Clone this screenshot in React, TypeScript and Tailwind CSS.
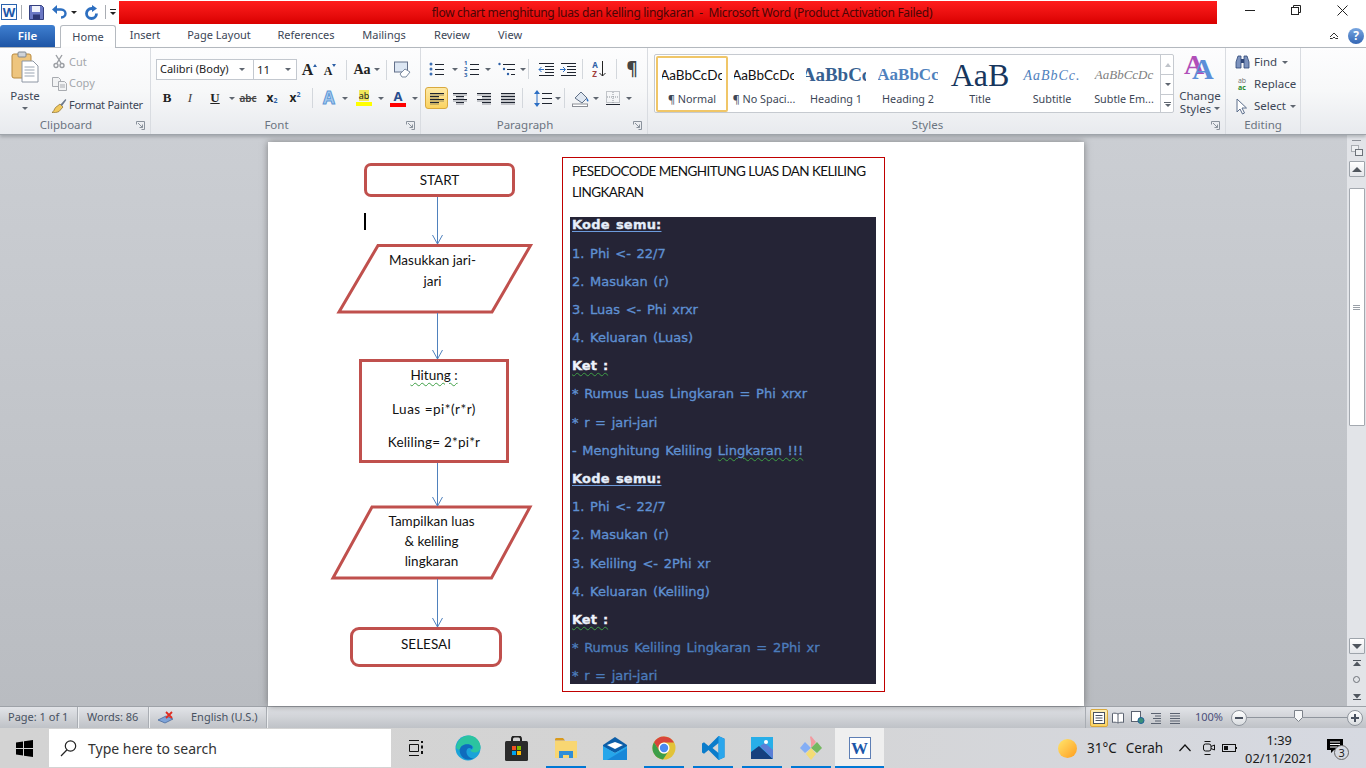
import type { ReactNode } from "react";

const Caret = ({ c = "" }: { c?: string }) => (
  <span className={`inline-block w-0 h-0 shrink-0 border-x-[3px] border-t-[3px] border-x-transparent border-t-[#5f6670] ${c}`} />
);

const B = ({ c = "", children }: { c?: string; children?: ReactNode }) => (
  <span className={`flex items-center justify-center shrink-0 h-full ${c}`}>{children}</span>
);

const Sep = ({ c = "" }: { c?: string }) => <span className={`block w-px h-[20px] shrink-0 bg-[#d3d7dc] ${c}`} />;

const Launcher = ({ c = "" }: { c?: string }) => (
  <svg width="9" height="9" viewBox="0 0 9 9" className={`shrink-0 ${c}`} fill="none" stroke="#8a929c">
    <path d="M.5 3.5v-3h8v8h-3" />
    <path d="M2 2l4.5 4.5M6.5 3.5v3h-3" />
  </svg>
);

const Group = ({ c, label, launcher = true, children }: { c: string; label: string; launcher?: boolean; children: ReactNode }) => (
  <div className={`flex flex-col shrink-0 h-full border-r border-[#d9dce1] ${c}`}>
    <div className="flex-1 min-h-0">{children}</div>
    <div className="flex items-center h-[18px] shrink-0">
      <span className={`flex-1 text-center text-[11.5px] text-[#6b7480] ${launcher ? "pr-[4px]" : ""}`}>{label}</span>
      {launcher && <Launcher c="mr-[5px]" />}
    </div>
  </div>
);

const Lines = ({ kind }: { kind: "left" | "center" | "right" | "just" }) => {
  const rows = [3, 6, 9, 12];
  const ends: Record<string, number[][]> = {
    left: [[1, 15], [1, 10], [1, 15], [1, 10]],
    center: [[1, 15], [4, 12], [1, 15], [4, 12]],
    right: [[1, 15], [6, 15], [1, 15], [6, 15]],
    just: [[1, 15], [1, 15], [1, 15], [1, 15]],
  };
  return (
    <svg width="16" height="16" viewBox="0 0 16 16" stroke="#1f2530" strokeWidth="1">
      {rows.map((y, i) => (
        <g key={y}>
          <line x1={ends[kind][i][0]} x2={ends[kind][i][1]} y1={y + 0.5} y2={y + 0.5} />
          <line x1={ends[kind][i][0]} x2={ends[kind][i][1]} y1={y + 2} y2={y + 2} strokeOpacity=".45" />
        </g>
      ))}
    </svg>
  );
};

const PasteIcon = () => (
  <svg width="28" height="32" viewBox="0 0 28 32">
    <rect x="1" y="3" width="19" height="24" rx="2" fill="#eec57e" stroke="#b98a3e" />
    <rect x="7" y="1" width="8" height="5" rx="1" fill="#cfd3d8" stroke="#7f8790" />
    <path d="M11 10h11l5 5v16H11z" fill="#fff" stroke="#8d96a3" />
    <path d="M13.5 16h10M13.5 19h10M13.5 22h10M13.5 25h10" stroke="#9aa5b3" />
  </svg>
);

const Scissors = () => (
  <svg width="12" height="15" viewBox="0 0 12 15" fill="none" stroke="#9b9ea3" strokeWidth="1.4">
    <path d="M3 1l5 8M9 1L4 9" />
    <circle cx="3" cy="11.5" r="2" />
    <circle cx="9" cy="11.5" r="2" />
  </svg>
);

const CopyIcon = () => (
  <svg width="15" height="14" viewBox="0 0 15 14" fill="#f2f3f4" stroke="#a8abb0">
    <path d="M.5.5h6l2 2v7h-8z" />
    <path d="M6.5 4.5h6l2 2v7h-8z" />
    <path d="M8 8h5M8 10h5" />
  </svg>
);

const BrushIcon = () => (
  <svg width="16" height="15" viewBox="0 0 16 15">
    <path d="M9 6l3 3-4 4.5c-2 1-5 1.500-7 1 2-1 2-3 3.500-5z" fill="#f1c95f" stroke="#8a6b2a" strokeWidth=".7" />
    <path d="M9.500 6.500L14 1.500c.7-.7 1.700.3 1 1l-4 5.500z" fill="#6d7a8c" />
  </svg>
);

const Bullets = () => (
  <svg width="16" height="14" viewBox="0 0 16 14" stroke="#1f2530">
    <circle cx="2" cy="2" r="1.500" fill="#3d6fb3" stroke="none" />
    <circle cx="2" cy="7" r="1.500" fill="#3d6fb3" stroke="none" />
    <circle cx="2" cy="12" r="1.500" fill="#3d6fb3" stroke="none" />
    <path d="M6 2.500h9M6 7.500h9M6 12.500h9" />
  </svg>
);

const Numbers = () => (
  <div className="relative w-[16px] h-[14px]">
    <span className="absolute left-0 -top-[2px] flex flex-col text-[6px] leading-[6px] font-bold text-[#2c5fa6]">
      <span>1</span>
      <span>2</span>
      <span>3</span>
    </span>
    <svg width="16" height="14" viewBox="0 0 16 14" stroke="#1f2530">
      <path d="M6 2.500h9M6 7.500h9M6 12.500h9" />
    </svg>
  </div>
);

const Multi = () => (
  <svg width="18" height="14" viewBox="0 0 18 14" stroke="#1f2530">
    <circle cx="1.500" cy="2" r="1.200" fill="#2c5fa6" stroke="none" />
    <circle cx="6" cy="7" r="1.200" fill="#2c5fa6" stroke="none" />
    <circle cx="10" cy="12" r="1.200" fill="#2c5fa6" stroke="none" />
    <path d="M5 2.500h12M9 7.500h8M13 12.500h4" />
  </svg>
);

const Indent = ({ flip = false }: { flip?: boolean }) => (
  <svg width="17" height="15" viewBox="0 0 17 15" stroke="#1f2530">
    <path d="M1 1.500h15M7 4.500h9M7 7.500h9M7 10.500h9M1 13.500h15" />
    {flip ? <path d="M0 7.500h5M3 5l2.500 2.500L3 10" stroke="#2c6fc4" fill="none" /> : <path d="M6 7.500H1M3.500 5L1 7.500 3.500 10" stroke="#2c6fc4" fill="none" />}
  </svg>
);

const LineSpacing = () => (
  <svg width="20" height="17" viewBox="0 0 20 17">
    <path d="M4 0l3 4H1zM4 17l3-4H1zM3.500 4h1v9h-1z" fill="#2c6fc4" />
    <path d="M9 3.500h10M9 8.500h10M9 13.500h10" stroke="#1f2530" />
  </svg>
);

const Bucket = () => (
  <svg width="18" height="17" viewBox="0 0 18 17">
    <path d="M3 8l6-6 6 6-5 5z" fill="#dfe7f1" stroke="#5f6f85" />
    <path d="M15 8c1.500 2 2 3 1 3.500S14 10 15 8z" fill="#2c6fc4" />
    <rect x="0.500" y="14" width="15" height="2.500" fill="#fff" stroke="#8b8f96" />
  </svg>
);

const BorderIcon = () => (
  <svg width="14" height="14" viewBox="0 0 14 14" fill="none" stroke="#8d939b" strokeDasharray="1 1">
    <rect x=".5" y=".5" width="13" height="11" />
    <path d="M7 1v11M1 6h12" />
    <path d="M0 13.500h14" stroke="#1f2530" strokeDasharray="none" />
  </svg>
);

const Binocular = () => (
  <svg width="15" height="14" viewBox="0 0 15 14">
    <path d="M1 7l2-6h3v12H1zM14 7l-2-6H9v12h5z" fill="#7c92bd" stroke="#2f4677" strokeWidth=".8" />
    <rect x="6" y="4" width="3" height="4" fill="#2f4677" />
  </svg>
);

const Pointer = () => (
  <svg width="12" height="17" viewBox="0 0 12 17">
    <path d="M1 1v13l3-3 2.500 5 2-1-2.500-5h4.500z" fill="#fff" stroke="#5c6e8c" />
  </svg>
);

const StyleCell = ({ sample, label, c, active = false }: { sample: string; label: string; c: string; active?: boolean }) => (
  <div className={`flex flex-col items-center shrink-0 w-[72px] h-[56px] overflow-hidden ${active ? "border-[2px] rounded-[2px] border-[#f0c668] bg-white" : "border-[2px] border-transparent"}`}>
    <div className="flex items-center justify-center w-[60px] h-[34px] overflow-hidden">
      <span className={`whitespace-nowrap ${c}`}>{sample}</span>
    </div>
    <span className="text-[10.8px] leading-[14px] text-[#3c4656] whitespace-nowrap">{label}</span>
  </div>
);

const Tab = ({ c, label }: { c: string; label: string }) => (
  <span className={`flex items-center justify-center shrink-0 h-full text-[11px] text-[#3c4656] ${c}`}>{label}</span>
);

function TitleRow() {
  return (
    <div className="flex items-stretch h-[24px] shrink-0 bg-white">
      <div className="flex items-center w-[119px] shrink-0 pl-[1px]">
        <div className="relative flex items-center justify-center w-[16px] h-[16px] bg-[#fdfdff] border border-[#2a62ad]">
          <span className="text-[13px] leading-none font-bold text-[#1c56a8]">W</span>
        </div>
        <Sep c="ml-[4px] !h-[14px] !bg-[#a9adb3]" />
        <svg width="15" height="15" viewBox="0 0 15 15" className="ml-[7px]">
          <path d="M.5.5h12l2 2v12H.5z" fill="#6b78c4" stroke="#34407f" />
          <rect x="3" y="1" width="8" height="6" fill="#f0f2fa" />
          <rect x="4" y="9.500" width="7" height="5" fill="#2e3773" />
        </svg>
        <svg width="15" height="14" viewBox="0 0 15 14" className="ml-[8px]" fill="none">
          <path d="M4 4.500h5c6 0 6 8 0 8" stroke="#2d6fc0" strokeWidth="2.400" />
          <path d="M0 4.500L5 0v9z" fill="#2d6fc0" />
        </svg>
        <Caret c="ml-[4px] !border-t-[#222]" />
        <svg width="14" height="15" viewBox="0 0 14 15" className="ml-[8px]" fill="none">
          <path d="M8 3.500H6.500a5 5 0 1 0 5 5" stroke="#2d6fc0" strokeWidth="2.800" />
          <path d="M7 0l5 3.500L7 7z" fill="#2d6fc0" />
        </svg>
        <Sep c="ml-[6px] !h-[14px] !bg-[#a9adb3]" />
        <div className="flex flex-col items-center ml-[4px] gap-[2px]">
          <span className="block w-[6px] h-px bg-[#222]" />
          <Caret c="!border-t-[#222]" />
        </div>
      </div>
      <div className="flex items-center justify-center w-[1098px] shrink-0 mt-[1px] pl-[28px] bg-gradient-to-b from-[#ff1c1c] to-[#d90000] text-[12px] tracking-[-0.3px] text-[#4a0606] whitespace-pre">
        flow chart menghitung luas dan kelling lingkaran  -  Microsoft Word (Product Activation Failed)
      </div>
      <div className="flex items-center flex-1 pb-[4px]">
        <B c="w-[56px]">
          <span className="block w-[10px] h-px ml-[10px] bg-[#222]" />
        </B>
        <B c="w-[46px]">
          <svg width="10" height="10" viewBox="0 0 10 10" fill="none" stroke="#222">
            <path d="M2.500 2.500V.5h7v7h-2" />
            <rect x=".5" y="2.500" width="7" height="7" />
          </svg>
        </B>
        <B c="w-[46px]">
          <svg width="11" height="11" viewBox="0 0 11 11" stroke="#222">
            <path d="M.5.5l10 10M10.500.5l-10 10" />
          </svg>
        </B>
      </div>
    </div>
  );
}

function TabsRow() {
  return (
    <div className="relative flex items-stretch h-[24px] shrink-0 bg-white border-b border-[#b5bac0]">
      <span className="flex items-center justify-center w-[55px] mt-[1px] shrink-0 rounded-t-[3px] bg-gradient-to-b from-[#3f7fd0] to-[#1e55a5] text-[11.5px] font-semibold text-white">File</span>
      <span className="flex items-center justify-center w-[56px] ml-[5px] mt-[1px] -mb-px shrink-0 rounded-t-[3px] border border-b-0 border-[#b5bac0] bg-white text-[11px] text-[#3c4656]">Home</span>
      <Tab c="w-[58px]" label="Insert" />
      <Tab c="w-[90px]" label="Page Layout" />
      <Tab c="w-[84px]" label="References" />
      <Tab c="w-[72px]" label="Mailings" />
      <Tab c="w-[64px]" label="Review" />
      <Tab c="w-[52px]" label="View" />
      <div className="flex items-center justify-end flex-1 pr-[2px] gap-[9px]">
        <svg width="10" height="8" viewBox="0 0 10 8" fill="none" stroke="#333">
          <path d="M1 5l4-4 4 4M1 6.500h2.500L5 5l1.500 1.500H9" />
        </svg>
        <span className="flex items-center justify-center w-[16px] h-[16px] rounded-full bg-gradient-to-b from-[#78a6e0] to-[#3466b4] text-[12px] leading-none font-bold text-white">?</span>
      </div>
    </div>
  );
}

function Ribbon() {
  return (
    <div className="flex h-[87px] shrink-0 bg-gradient-to-b from-[#fdfdfe] via-[#f7f8f9] to-[#e8eaee] border-b border-[#9fa4aa] shadow-[0_2px_3px_rgba(90,95,100,0.35)] z-10">
      <Group c="w-[151px]" label="Clipboard">
        <div className="flex h-full pt-[3px]">
          <div className="flex flex-col items-center w-[50px] shrink-0">
            <PasteIcon />
            <span className="mt-[6px] text-[11.5px] leading-[14px] text-[#3c4656]">Paste</span>
            <Caret c="mt-[4px]" />
          </div>
          <div className="flex flex-col">
            <div className="flex items-center h-[22px] text-[11px] text-[#a4a7ab]">
              <B c="w-[18px]"><Scissors /></B>
              <span className="ml-[1px]">Cut</span>
            </div>
            <div className="flex items-center h-[22px] text-[11px] text-[#a4a7ab]">
              <B c="w-[18px]"><CopyIcon /></B>
              <span className="ml-[1px]">Copy</span>
            </div>
            <div className="flex items-center h-[22px] text-[11px] tracking-[-0.25px] text-[#3c4656]">
              <B c="w-[18px]"><BrushIcon /></B>
              <span className="ml-[1px] whitespace-nowrap">Format Painter</span>
            </div>
          </div>
        </div>
      </Group>

      <Group c="w-[270px]" label="Font">
        <div className="flex flex-col pl-[5px] pt-[11px]">
          <div className="flex items-center h-[21px]">
            <span className="flex items-center justify-between w-[98px] h-[21px] px-[3px] pr-[8px] border border-[#c3c8cf] bg-white text-[11px] text-[#222]">
              Calibri (Body)<Caret />
            </span>
            <span className="flex items-center justify-between w-[43px] h-[21px] px-[3px] pr-[5px] border border-l-0 border-[#c3c8cf] bg-white text-[11.5px] text-[#222]">
              11<Caret />
            </span>
            <B c="w-[23px] pl-[2px]">
              <span className="[font-family:'Liberation_Serif',serif] text-[16px] font-bold text-[#222]">A</span>
              <span className="block w-0 h-0 -mt-[8px] border-x-[2px] border-b-[3px] border-x-transparent border-b-[#2c5fa6]" />
            </B>
            <B c="w-[20px]">
              <span className="[font-family:'Liberation_Serif',serif] text-[12px] font-bold text-[#222] mt-[2px]">A</span>
              <span className="block w-0 h-0 -mt-[8px] border-x-[2px] border-t-[3px] border-x-transparent border-t-[#2c5fa6]" />
            </B>
            <Sep c="ml-[6px]" />
            <B c="w-[39px] gap-[3px]">
              <span className="[font-family:'Liberation_Serif',serif] text-[14px] font-bold text-[#222]">Aa</span>
              <Caret />
            </B>
            <Sep />
            <B c="w-[31px]">
              <svg width="17" height="17" viewBox="0 0 17 17">
                <rect x=".5" y="1" width="13" height="10" fill="#dce6f3" stroke="#63708a" />
                <path d="M6 13l5-5 5 3-4 5H8z" fill="#fff" stroke="#7a8aa0" />
              </svg>
            </B>
          </div>
          <div className="flex items-center h-[22px] mt-[7px] text-[#222]">
            <B c="w-[22px] [font-family:'Liberation_Serif',serif] text-[13px] font-bold">B</B>
            <B c="w-[24px] [font-family:'Liberation_Serif',serif] text-[13px] italic text-[#444]">I</B>
            <B c="w-[26px] [font-family:'Liberation_Serif',serif] text-[13px] font-bold underline">U</B>
            <B c="w-[8px]"><Caret /></B>
            <B c="w-[24px] text-[10px] font-semibold line-through text-[#444]">abc</B>
            <B c="w-[24px] text-[12px] font-bold">x<span className="text-[7px] mt-[6px] text-[#2c5fa6]">2</span></B>
            <B c="w-[22px] text-[12px] font-bold">x<span className="text-[7px] -mt-[6px] text-[#2c5fa6]">2</span></B>
            <Sep c="ml-[6px]" />
            <B c="w-[24px] ml-[4px] text-[17px] font-bold text-[#a8cdf0] [-webkit-text-stroke:1px_#5f98d6]">A</B>
            <B c="w-[8px]"><Caret /></B>
            <B c="w-[26px] ml-[2px]">
              <span className="flex flex-col items-center w-[16px]">
                <span className="text-[9px] leading-[11px] bg-[#f0e85a] text-[#222]">ab</span>
                <span className="block w-[16px] h-[4px] mt-[1px] bg-[#ffff00]" />
              </span>
            </B>
            <B c="w-[8px]"><Caret /></B>
            <B c="w-[26px]">
              <span className="flex flex-col items-center w-[16px]">
                <span className="text-[13px] leading-[13px] font-bold text-[#2a4f8f]">A</span>
                <span className="block w-[16px] h-[4px] bg-[#ff0000]" />
              </span>
            </B>
            <B c="w-[8px]"><Caret /></B>
          </div>
        </div>
      </Group>

      <Group c="w-[227px]" label="Paragraph">
        <div className="flex flex-col pl-[4px] pt-[10px]">
          <div className="flex items-center h-[22px]">
            <B c="w-[22px] pl-[2px]"><Bullets /></B>
            <B c="w-[12px] pl-[4px]"><Caret /></B>
            <B c="w-[22px] ml-[2px]"><Numbers /></B>
            <B c="w-[10px]"><Caret /></B>
            <B c="w-[24px] ml-[2px]"><Multi /></B>
            <B c="w-[8px]"><Caret /></B>
            <Sep c="ml-[1px]" />
            <B c="w-[22px] ml-[6px]"><Indent /></B>
            <B c="w-[22px]"><Indent flip /></B>
            <Sep c="ml-[3px]" />
            <B c="w-[20px] ml-[6px] gap-[1px]">
              <span className="flex flex-col text-[8px] leading-[9px] font-bold">
                <span className="text-[#2c5fa6]">A</span>
                <span className="text-[#a03b3b]">Z</span>
              </span>
              <svg width="7" height="16" viewBox="0 0 7 16" fill="none" stroke="#222">
                <path d="M3.500 0v15M.5 12l3 3 3-3" />
              </svg>
            </B>
            <Sep c="ml-[7px]" />
            <B c="w-[30px] text-[17px] font-bold text-[#444]">¶</B>
          </div>
          <div className="flex items-center h-[22px] mt-[7px]">
            <B c="w-[23px] rounded-[3px] border border-[#d9a93e] bg-gradient-to-b from-[#fde9a5] to-[#fbd35f]"><Lines kind="left" /></B>
            <B c="w-[24px]"><Lines kind="center" /></B>
            <B c="w-[24px]"><Lines kind="right" /></B>
            <B c="w-[23px]"><Lines kind="just" /></B>
            <Sep c="ml-[3px]" />
            <B c="w-[24px] ml-[8px]"><LineSpacing /></B>
            <B c="w-[6px]"><Caret /></B>
            <Sep c="ml-[3px]" />
            <B c="w-[22px] ml-[5px]"><Bucket /></B>
            <B c="w-[8px]"><Caret /></B>
            <B c="w-[22px] ml-[2px]"><BorderIcon /></B>
            <B c="w-[8px] ml-[1px]"><Caret /></B>
          </div>
        </div>
      </Group>

      <Group c="w-[578px]" label="Styles">
        <div className="flex pt-[6px] pl-[6px]">
          <div className="flex w-[520px] h-[59px] shrink-0 p-[1px] border border-[#c6cad0] rounded-[2px] bg-white">
            <StyleCell active sample="AaBbCcDc" label="¶ Normal" c="[font-family:'Lato',sans-serif] text-[13.5px] text-[#111]" />
            <StyleCell sample="AaBbCcDc" label="¶ No Spaci..." c="[font-family:'Lato',sans-serif] text-[13.5px] text-[#111]" />
            <StyleCell sample="AaBbCc" label="Heading 1" c="[font-family:'Liberation_Serif',serif] text-[19px] font-bold text-[#366091]" />
            <StyleCell sample="AaBbCc" label="Heading 2" c="[font-family:'Liberation_Serif',serif] text-[17px] font-bold text-[#4f81bd]" />
            <StyleCell sample="AaB" label="Title" c="[font-family:'Liberation_Serif',serif] text-[32px] text-[#17365d]" />
            <StyleCell sample="AaBbCc." label="Subtitle" c="[font-family:'Liberation_Serif',serif] text-[14px] italic tracking-[1px] text-[#4f81bd]" />
            <StyleCell sample="AaBbCcDc" label="Subtle Em..." c="[font-family:'Liberation_Serif',serif] text-[13px] italic text-[#808080]" />
            <div className="flex flex-col w-[14px] shrink-0 -my-[1px] -mr-[1px] ml-auto border-l border-[#c6cad0] divide-y divide-[#c6cad0]">
              <B c="!h-[20px]"><span className="block w-0 h-0 border-x-[3px] border-b-[4px] border-x-transparent border-b-[#bfc3c9]" /></B>
              <B c="!h-[20px]"><Caret /></B>
              <B c="!h-[19px] flex-col gap-[1px]"><span className="block w-[7px] h-px bg-[#5f6670]" /><Caret /></B>
            </div>
          </div>
          <div className="flex flex-col items-center w-[46px] ml-[3px] shrink-0">
            <div className="relative w-[32px] h-[28px] mt-[1px]">
              <span className="absolute left-0 top-[-5px] [font-family:'Liberation_Serif',serif] text-[28px] leading-[30px] font-bold text-[#b04fb8]">A</span>
              <span className="absolute left-[8px] top-[-1px] [font-family:'Liberation_Serif',serif] text-[30px] leading-[30px] font-bold text-[#5b8fd8]">A</span>
            </div>
            <span className="mt-[6px] text-[11.5px] leading-[13px] text-[#3c4656]">Change</span>
            <span className="flex items-center gap-[3px] text-[11.5px] leading-[13px] text-[#3c4656]">Styles<Caret /></span>
          </div>
        </div>
      </Group>

      <Group c="w-[75px]" label="Editing" launcher={false}>
        <div className="flex flex-col pt-[3px] text-[11.5px] text-[#3c4656]">
          <div className="flex items-center h-[22px] pl-[8px]">
            <B c="w-[16px]"><Binocular /></B>
            <span className="ml-[4px]">Find</span>
            <Caret c="ml-[5px]" />
          </div>
          <div className="flex items-center h-[22px] pl-[8px]">
            <B c="w-[16px] flex-col !justify-center">
              <span className="text-[7px] leading-[7px] text-[#777]">ab</span>
              <span className="text-[7px] leading-[7px] font-bold text-[#2b8a2b]">ac</span>
            </B>
            <span className="ml-[4px]">Replace</span>
          </div>
          <div className="flex items-center h-[22px] pl-[8px]">
            <B c="w-[16px]"><Pointer /></B>
            <span className="ml-[4px]">Select</span>
            <Caret c="ml-[4px]" />
          </div>
        </div>
      </Group>
      <div className="flex-1" />
    </div>
  );
}

const wavy = "underline decoration-wavy decoration-[#3f9f46] decoration-1 underline-offset-2";

type Row = { t: ReactNode; kind?: "head" | "ket" | "dim" };

const rows: Row[] = [
  { t: "Kode semu:", kind: "head" },
  { t: "1. Phi <- 22/7" },
  { t: "2. Masukan (r)" },
  { t: "3. Luas <- Phi xrxr" },
  { t: "4. Keluaran (Luas)" },
  { t: "Ket :", kind: "ket" },
  { t: "* Rumus Luas Lingkaran = Phi xrxr" },
  { t: "* r = jari-jari" },
  { t: <>- Menghitung Keliling <span className={wavy}>Lingkaran !!!</span></> },
  { t: "Kode semu:", kind: "head" },
  { t: "1. Phi <- 22/7" },
  { t: "2. Masukan (r)" },
  { t: "3. Keliling <- 2Phi xr" },
  { t: "4. Keluaran (Keliling)" },
  { t: "Ket :", kind: "ket" },
  { t: "* Rumus Keliling Lingkaran = 2Phi xr", kind: "dim" },
  { t: "* r = jari-jari", kind: "dim" },
];

const rowClass = (kind?: Row["kind"]) => {
  if (kind === "head") return "text-[#e6eefa] font-bold underline decoration-[#6d9bdc] underline-offset-2 tracking-[0.2px]";
  if (kind === "ket") return `text-[#eef3fb] font-bold ${wavy}`;
  if (kind === "dim") return "text-[#4c7cbc]";
  return "text-[#5f90d2]";
};

function Flowchart() {
  const border = "border-[3px] border-[#c0504d]";
  return (
    <div className="relative w-[816px] flex-1 bg-white shadow-[0_0_7px_rgba(60,60,60,0.55)] [font-family:'Lato',sans-serif] text-[13.5px] text-[#111]">
      <svg width="816" height="564" viewBox="0 0 816 564" className="absolute left-0 top-0" fill="none">
        <path d="M110 103.500H262.500L224 170H71Z" stroke="#c0504d" strokeWidth="3" />
        <path d="M104 365H262L223.500 436H65Z" stroke="#c0504d" strokeWidth="3" />
        <g stroke="#4f81bd">
          <path d="M169.500 55V102M164.500 93L169.500 102L174.500 93" />
          <path d="M169.500 171V217M164.500 208L169.500 217L174.500 208" />
          <path d="M169.500 320V364M164.500 355L169.500 364L174.500 355" />
          <path d="M169.500 437V485M164.500 476L169.500 485L174.500 476" />
        </g>
      </svg>

      <div className={`absolute left-[96px] top-[21px] w-[151px] h-[34px] flex items-center justify-center rounded-[7px] ${border}`}>START</div>
      <span className="absolute left-[96px] top-[71px] w-[2px] h-[17px] bg-black" />
      <div className="absolute left-[100px] top-[108px] w-[129px] text-center leading-[21px]">
        <div>Masukkan jari-</div>
        <div>jari</div>
      </div>
      <div className={`absolute left-[91px] top-[217px] w-[150px] h-[104px] flex flex-col items-center ${border}`}>
        <div className="flex items-center h-[26px]"><span className={wavy}>Hitung :</span></div>
        <div className="flex items-center h-[34px] mt-[4px] tracking-[0.5px]">Luas =pi*(r*r)</div>
        <div className="flex items-center h-[32px] tracking-[0.2px]">Keliling= 2*pi*r</div>
      </div>
      <div className="absolute left-[99px] top-[369px] w-[129px] text-center leading-[20px]">
        <div>Tampilkan luas</div>
        <div>&amp; keliling</div>
        <div>lingkaran</div>
      </div>
      <div className={`absolute left-[82px] top-[485px] w-[152px] h-[40px] flex items-center justify-center pb-[6px] rounded-[9px] ${border}`}>SELESAI</div>

      <div className="absolute left-[294px] top-[15px] w-[323px] h-[535px] border border-[#c00000] px-[7px] pt-[3px]">
        <div className="pl-[2px] leading-[21px] tracking-[-0.6px]">
          <div className="whitespace-nowrap">PESEDOCODE MENGHITUNG LUAS DAN KELILING</div>
          <div>LINGKARAN</div>
        </div>
        <div className="w-[306px] h-[467px] mt-[14px] overflow-hidden bg-[#252436] pl-[2px] [font-family:'DejaVu_Sans',sans-serif] text-[13px]">
          <div className="-mt-[6px]">
            {rows.map((r, i) => (
              <div key={i} className="flex items-center h-[28.2px] whitespace-pre [word-spacing:1.500px] [-webkit-text-stroke:0.35px]">
                <span className={rowClass(r.kind)}>{r.t}</span>
              </div>
            ))}
          </div>
        </div>
      </div>
    </div>
  );
}

function Scrollbar() {
  const btn = "flex items-center justify-center w-[16px] h-[16px] border border-[#9ea4ab] rounded-[1px] bg-gradient-to-b from-white to-[#e4e6ea]";
  return (
    <div className="flex flex-col items-center w-[19px] shrink-0 bg-[#e2e4e8]">
      <span className="block w-[9px] h-px mt-[5px] bg-[#8d9198]" />
      <svg width="12" height="11" viewBox="0 0 12 11" className="mt-[4px]" fill="#eef0f2" stroke="#6d7279">
        <rect x=".5" y=".5" width="7" height="6" strokeDasharray="1 1" />
        <rect x="4.500" y="4.500" width="7" height="6" />
      </svg>
      <span className={`${btn} mt-[5px]`}>
        <span className="block w-0 h-0 border-x-[5px] border-b-[5px] border-x-transparent border-b-[#50565e]" />
      </span>
      <span className="flex items-center justify-center w-[16px] h-[238px] mt-[11px] border border-[#a4a9b0] rounded-[1px] bg-white">
        <span className="flex flex-col gap-[1px]">
          <span className="block w-[7px] h-px bg-[#9aa0a8]" />
          <span className="block w-[7px] h-px bg-[#9aa0a8]" />
          <span className="block w-[7px] h-px bg-[#9aa0a8]" />
        </span>
      </span>
      <span className="flex-1" />
      <span className={btn}>
        <span className="block w-0 h-0 border-x-[5px] border-t-[5px] border-x-transparent border-t-[#50565e]" />
      </span>
      <svg width="8" height="8" viewBox="0 0 8 8" className="mt-[5px]" fill="#50565e">
        <path d="M0 1h8v1H0zM4 2.500L8 7H0z" />
      </svg>
      <span className="block w-[7px] h-[7px] mt-[9px] rounded-full border border-[#6d7279]" />
      <svg width="8" height="8" viewBox="0 0 8 8" className="mt-[10px] mb-[5px]" fill="#50565e">
        <path d="M0 6h8v1H0zM4 5.500L8 1H0z" />
      </svg>
    </div>
  );
}

function StatusBar() {
  const cell = "flex items-center h-full border-r border-[#a9adb3] shadow-[1px_0_0_#eceef0] text-[11px] text-[#485262]";
  return (
    <div className="flex items-center h-[22px] shrink-0 border-t border-[#9ea2a8] bg-gradient-to-b from-[#e2e4e8] to-[#bfc2c7]">
      <span className={`${cell} w-[78px] pl-[8px]`}>Page: 1 of 1</span>
      <span className={`${cell} w-[71px] pl-[9px]`}>Words: 86</span>
      <span className={`${cell} w-[118px]`}>
        <svg width="18" height="16" viewBox="0 0 18 16" className="ml-[8px]">
          <path d="M1 10l8-4 7 3-8 4z" fill="#7fa4d8" stroke="#3a5e96" strokeWidth=".7" />
          <path d="M9 2l6 6M15 2l-6 6" stroke="#e02b20" strokeWidth="1.800" />
        </svg>
        <span className="ml-[16px]">English (U.S.)</span>
      </span>
      <div className="flex items-center h-full ml-auto">
        <span className="block w-px h-full bg-[#a9adb3]" />
        <span className="flex items-center justify-center w-[18px] h-[18px] ml-[4px] rounded-[2px] border border-[#d9a93e] bg-gradient-to-b from-[#fdeeb6] to-[#fbd35f]">
          <svg width="12" height="12" viewBox="0 0 12 12" fill="#fff" stroke="#4a5260"><rect x=".5" y=".5" width="11" height="11" /><path d="M2.500 3.500h7M2.500 6h7M2.500 8.500h7" /></svg>
        </span>
        <svg width="12" height="12" viewBox="0 0 12 12" className="ml-[4px]" fill="#fff" stroke="#5a6270"><path d="M6 2C4 1 2 1 .5 1.500v9C2 10 4 10 6 11c2-1 4-1 5.500-.5v-9C10 1 8 1 6 2zM6 2v9" /></svg>
        <svg width="14" height="13" viewBox="0 0 14 13" className="ml-[7px]" fill="#fff" stroke="#5a6270"><rect x=".5" y=".5" width="9" height="10" /><circle cx="10" cy="9.500" r="3" fill="#3a8f7a" stroke="#1e5f9a" /></svg>
        <svg width="12" height="12" viewBox="0 0 12 12" className="ml-[5px]" stroke="#5a6270"><path d="M1 1.500h10M5 4h6M3 6.500h8M5 9h6M1 11.500h10" /></svg>
        <svg width="12" height="12" viewBox="0 0 12 12" className="ml-[7px]" stroke="#5a6270"><path d="M1 1.500h10M1 4h10M1 6.500h10M1 9h10M1 11.500h10" /></svg>
        <span className="ml-[14px] text-[11px] text-[#4b4f7a]">100%</span>
        <span className="flex items-center justify-center w-[16px] h-[16px] ml-[8px] rounded-full border border-[#8f959d] bg-gradient-to-b from-white to-[#d9dce0]">
          <span className="block w-[8px] h-[2px] bg-[#4a5260]" />
        </span>
        <div className="relative flex items-center w-[100px] h-full">
          <span className="block w-full h-px bg-[#8f959d]" />
          <svg width="9" height="12" viewBox="0 0 9 12" className="absolute left-[47px] top-[3px]" fill="#f7f8f9" stroke="#7c828a"><path d="M.5.5h8v7l-4 4-4-4z" /></svg>
        </div>
        <span className="relative flex items-center justify-center w-[16px] h-[16px] mr-[3px] rounded-full border border-[#8f959d] bg-gradient-to-b from-white to-[#d9dce0]">
          <span className="block w-[8px] h-[2px] bg-[#4a5260]" />
          <span className="absolute block w-[2px] h-[8px] bg-[#4a5260]" />
        </span>
      </div>
    </div>
  );
}

const App1 = ({ on = true, active = false, children }: { on?: boolean; active?: boolean; children: ReactNode }) => (
  <div className={`relative flex items-center justify-center w-[49px] h-full shrink-0 ${active ? "bg-[#efefef]" : ""}`}>
    {children}
    {on && <span className={`absolute bottom-0 h-[2px] bg-[#0078d4] ${active ? "w-full" : "w-[40px]"}`} />}
  </div>
);

function Taskbar() {
  return (
    <div className="flex items-stretch h-[40px] shrink-0 bg-gradient-to-r from-[#d3d3d3] via-[#d4d4d4] to-[#d6d9e1] [font-family:'Noto_Sans',sans-serif] text-[#1b1b1b]">
      <div className="flex items-center justify-center w-[49px] shrink-0">
        <svg width="17" height="17" viewBox="0 0 17 17" fill="#000">
          <path d="M0 2.400L7 1.400V8H0zM8 1.300L17 0V8H8zM0 9h7v6.600l-7-1zM8 9h9v8l-9-1.300z" />
        </svg>
      </div>
      <div className="flex items-center w-[342px] shrink-0 my-[1px] bg-white">
        <svg width="17" height="17" viewBox="0 0 17 17" className="ml-[11px]" fill="none" stroke="#222" strokeWidth="1.200">
          <circle cx="10.500" cy="6" r="5.200" />
          <path d="M6.800 10L1 16" />
        </svg>
        <span className="ml-[11px] text-[14px] text-[#333]">Type here to search</span>
      </div>
      <div className="flex items-center justify-center w-[52px] shrink-0">
        <svg width="16" height="16" viewBox="0 0 16 16" fill="none" stroke="#111">
          <path d="M0 .5h10M0 15.500h10M.5 4.500h9v7h-9z" />
          <path d="M13 1v2M13 5.500v3M13 11v3" strokeWidth="2" />
        </svg>
      </div>
      <App1 on={false}>
        <svg width="26" height="26" viewBox="0 0 26 26">
          <circle cx="13" cy="13" r="12.500" fill="#1aa3d9" />
          <path d="M1 13C2 5 8 .5 14 .5c6 0 11.500 5 11.500 12 0 3-3 5-6 5-2 0-4-1-4-2.500 3 0 3.500-2.500 2-4-3-3-10-2-12 3-1 2.500-1.500 2-2 .5z" fill="#2bc4a0" />
          <path d="M5 14c1-5 9-6 12-3 .8 1 .6 2.400-.5 3-2-2-4.500-1-5 2-.5 4 3 7.500 7 7.500-6 3-14 0-14-9.500z" fill="#0f6cbd" />
        </svg>
      </App1>
      <App1 on={false}>
        <svg width="23" height="25" viewBox="0 0 23 25">
          <path d="M7 7V3c0-1.500 1-2.500 2.500-2.500h4C15 .5 16 1.500 16 3v4" fill="none" stroke="#222" strokeWidth="2" />
          <rect x="0" y="5" width="23" height="20" rx="1.500" fill="#2b2b2b" />
          <rect x="7" y="10" width="4" height="4" fill="#f25022" />
          <rect x="12" y="10" width="4" height="4" fill="#7fba00" />
          <rect x="7" y="15" width="4" height="4" fill="#00a4ef" />
          <rect x="12" y="15" width="4" height="4" fill="#ffb900" />
        </svg>
      </App1>
      <App1>
        <svg width="22" height="20" viewBox="0 0 22 20">
          <path d="M0 1.500C0 .7.600 0 1.500 0H8l2 2.500H0z" fill="#d99a1c" />
          <path d="M0 3h22v17H0z" fill="#f8d672" />
          <path d="M4 13h14v7h-4v-3H8v3H4z" fill="#2f8ed8" />
        </svg>
      </App1>
      <App1 on={false}>
        <svg width="24" height="23" viewBox="0 0 24 23">
          <path d="M12 0l12 8v2L12 16 0 10V8z" fill="#0c5ea8" />
          <path d="M4 8l8-3 8 3-8 4z" fill="#fff" />
          <path d="M0 9l12 7 12-7v14H0z" fill="#26a6ea" />
          <path d="M24 23H4l20-12z" fill="#1787d8" />
        </svg>
      </App1>
      <App1>
        <svg width="24" height="24" viewBox="0 0 24 24">
          <circle cx="12" cy="12" r="11.500" fill="#e2c339" />
          <path d="M12 .5A11.500 11.500 0 0 0 2 6.200L6.800 14a5.500 5.500 0 0 1 5.200-7.500h10A11.500 11.500 0 0 0 12 .5z" fill="#d9453b" />
          <path d="M2 6.200A11.500 11.500 0 0 0 11 23.500l5-7.500a5.500 5.500 0 0 1-9.200-2z" fill="#3c9e4a" />
          <circle cx="12" cy="12" r="5.500" fill="#fff" />
          <circle cx="12" cy="12" r="4.200" fill="#4c8af0" />
        </svg>
      </App1>
      <App1>
        <svg width="24" height="24" viewBox="0 0 24 24">
          <path d="M17.500 0L7.500 10 3 6.300 1 7.400v9.200l2 1.100 4.500-3.700 10 10 6-2.800V2.800zM17.500 7v10l-6-5z" fillRule="evenodd" fill="#0a7ccb" />
          <path d="M17.500 0l6 2.800v18.400l-6 2.800z" fill="#2aa6ec" />
        </svg>
      </App1>
      <App1>
        <svg width="22" height="22" viewBox="0 0 22 22">
          <rect width="22" height="22" fill="#27aee8" />
          <path d="M0 22V15l8-6 14 13z" fill="#16407e" />
          <path d="M9 9l5-3 8 7v9z" fill="#5b7fd6" />
          <circle cx="15" cy="5" r="2" fill="#fff" />
        </svg>
      </App1>
      <App1>
        <svg width="24" height="24" viewBox="0 0 24 24">
          <path d="M12 12L6 6 1 12l5 5z" fill="#84aef5" />
          <path d="M12 12l5-6-5-6-1 1 1 5z" fill="#f29aa0" />
          <path d="M12 12l6-6 5 6-5 5z" fill="#74b860" />
          <path d="M12 12l-5 6 5 6 5-6z" fill="#f3dc75" />
        </svg>
      </App1>
      <App1 active>
        <div className="flex items-center justify-center w-[22px] h-[22px] border border-[#5e7fb5] bg-white">
          <span className="text-[17px] leading-none font-bold text-[#1c56a8] [font-family:'Liberation_Serif',serif]">W</span>
        </div>
      </App1>

      <div className="flex items-center flex-1 pl-[174px]">
        <span className="block w-[19px] h-[19px] shrink-0 rounded-full bg-gradient-to-br from-[#ffe66b] to-[#ff9c10]" />
        <span className="ml-[10px] text-[13.5px] whitespace-nowrap">31°C</span>
        <span className="ml-[9px] text-[13.5px] whitespace-nowrap">Cerah</span>
        <svg width="12" height="8" viewBox="0 0 12 8" className="ml-[16px] shrink-0" fill="none" stroke="#111" strokeWidth="1.200"><path d="M.5 7L6 1l5.500 6" /></svg>
        <svg width="12" height="16" viewBox="0 0 12 16" className="ml-[12px] shrink-0" fill="none" stroke="#111">
          <rect x=".5" y="4" width="7.500" height="7" rx="2" />
          <path d="M8 6.500L11.500 5v5L8 8.500M1.500 1.500h6M1.500 14.500h6" />
        </svg>
        <svg width="15" height="8" viewBox="0 0 15 8" className="ml-[7px] shrink-0" fill="none" stroke="#111">
          <rect x=".5" y=".5" width="13" height="7" />
          <rect x="2" y="2" width="4" height="4" fill="#111" stroke="none" />
          <path d="M14.500 3v2" />
        </svg>
        <div className="flex flex-col items-center w-[78px] ml-[3px] pt-[1px] shrink-0 text-[12.8px] leading-[18px]">
          <span>1:39</span>
          <span>02/11/2021</span>
        </div>
        <div className="relative w-[20px] h-[24px] ml-[9px] shrink-0">
          <svg width="16" height="15" viewBox="0 0 16 15" className="absolute left-0 top-[3px]">
            <path d="M0 0h16v11H7l-3 3v-3H0z" fill="#000" />
            <path d="M3 3h10M3 5.500h10M3 8h7" stroke="#fff" />
          </svg>
          <span className="absolute left-[7px] top-[9px] flex items-center justify-center w-[15px] h-[15px] rounded-full border border-[#666] bg-[#d6d9e1] text-[11px] leading-none">3</span>
        </div>
      </div>
    </div>
  );
}

export default function App() {
  return (
    <div className="flex flex-col w-[1366px] h-[768px] overflow-hidden bg-white [font-family:'Noto_Sans',sans-serif]">
      <TitleRow />
      <TabsRow />
      <Ribbon />
      <div className="flex flex-1 min-h-0">
        <div className="flex flex-col flex-1 pl-[268px] pt-[7px] bg-gradient-to-b from-[#cbced3] to-[#b9bcc1]">
          <Flowchart />
        </div>
        <Scrollbar />
      </div>
      <StatusBar />
      <Taskbar />
    </div>
  );
}
